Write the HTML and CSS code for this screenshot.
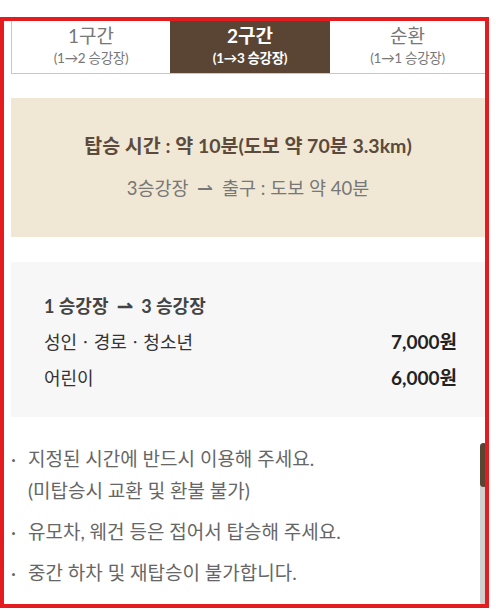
FILE: index.html
```html
<!DOCTYPE html>
<html lang="ko">
<head>
<meta charset="UTF-8">
<meta name="viewport" content="width=device-width, initial-scale=1.0">
<link rel="stylesheet" href="styles.css">
</head>
<body>
  <div class="frame">
    <div class="content">
      <div class="tabs">
        <div class="tab first">
          <div class="tab-title">1구간</div>
          <div class="tab-sub">(1→2 승강장)</div>
        </div>
        <div class="tab active">
          <div class="tab-title">2구간</div>
          <div class="tab-sub">(1→3 승강장)</div>
        </div>
        <div class="tab">
          <div class="tab-title">순환</div>
          <div class="tab-sub">(1→1 승강장)</div>
        </div>
      </div>

      <div class="time-box">
        <p class="time-main">탑승 시간 : 약 10분(도보 약 70분 3.3km)</p>
        <p class="time-sub">3승강장 <span class="arrow">⇀</span> 출구 : 도보 약 40분</p>
      </div>

      <div class="price-box">
        <p class="route">1 승강장 <span class="arrow">⇀</span> 3 승강장</p>
        <div class="price-row">
          <span>성인ㆍ경로ㆍ청소년</span>
          <strong>7,000원</strong>
        </div>
        <div class="price-row">
          <span>어린이</span>
          <strong>6,000원</strong>
        </div>
      </div>

      <ul class="notice">
        <li>지정된 시간에 반드시 이용해 주세요.<br>(미탑승시 교환 및 환불 불가)</li>
        <li>유모차, 웨건 등은 접어서 탑승해 주세요.</li>
        <li>중간 하차 및 재탑승이 불가합니다.</li>
        <li>우천 시 운행이 중단될 수 있으니 참고해 주세요.</li>
      </ul>
    </div>
    <div class="scrollbar"><div class="thumb"></div></div>
  </div>
</body>
</html>
```

FILE: styles.css
```css
body {
  margin: 0;
  background: #fff;
  font-family: Lato, "Noto Sans CJK KR", sans-serif;
}

.frame {
  position: relative;
  margin-top: 17px;
  width: 481px;
  height: 583px;
  border: 4px solid #e51c1f;
  overflow: hidden;
}

.content {
  padding-left: 7px;
}

.tabs {
  display: grid;
  grid-template-columns: 159px 160px 1fr;
  border-bottom: 1px solid #c8c8c8;
}

.tab {
  height: 52px;
  text-align: center;
  color: #777;
  padding-top: 3px;
  box-sizing: border-box;
}

.tab.first {
  border-left: 1px solid #c8c8c8;
}

.tab.active {
  background-color: #5a4535;
  color: #fff;
  font-weight: bold;
}

.tab-title {
  font-size: 19px;
  line-height: 24px;
}

.tab-sub {
  font-size: 13.5px;
  line-height: 20px;
  letter-spacing: -0.3px;
}

.time-box {
  margin-top: 24px;
  background-color: #f0e8d5;
  height: 139px;
  padding-top: 34px;
  box-sizing: border-box;
  text-align: center;
}

.time-box p {
  margin: 0;
}

.time-main {
  font-size: 19.5px;
  font-weight: bold;
  color: #5c4a3c;
  line-height: 28px;
}

.time-sub {
  margin-top: 14px !important;
  font-size: 18.5px;
  color: #777;
  line-height: 28px;
}

.arrow {
  font-size: 19px;
  margin: 0 4px;
}

.price-box {
  margin-top: 25px;
  background-color: #f7f7f7;
  height: 155px;
  padding: 30px 28px 0 33px;
  box-sizing: border-box;
}

.route {
  margin: 0 0 8px;
  font-size: 18px;
  font-weight: bold;
  color: #444;
  line-height: 28px;
}

.price-row {
  display: flex;
  justify-content: space-between;
  font-size: 18px;
  color: #333;
  line-height: 28px;
  margin-bottom: 8px;
}

.price-row strong {
  font-size: 19px;
  color: #222;
}

.notice {
  list-style: none;
  margin: 26px 0 0;
  padding: 0;
  font-size: 19px;
  color: #666;
}

.notice li {
  position: relative;
  padding-left: 17px;
  line-height: 32px;
  margin-bottom: 9px;
}

.notice li:last-child {
  margin-top: 14px;
}

.notice li::before {
  content: "·";
  position: absolute;
  left: 0;
  top: 0;
}

.scrollbar {
  position: absolute;
  right: -2px;
  top: 422px;
  width: 7px;
  height: 162px;
  background-color: #cfcfcf;
  border-radius: 4px;
}

.thumb {
  height: 44px;
  background-color: #5a4535;
  border-radius: 4px;
}
```
